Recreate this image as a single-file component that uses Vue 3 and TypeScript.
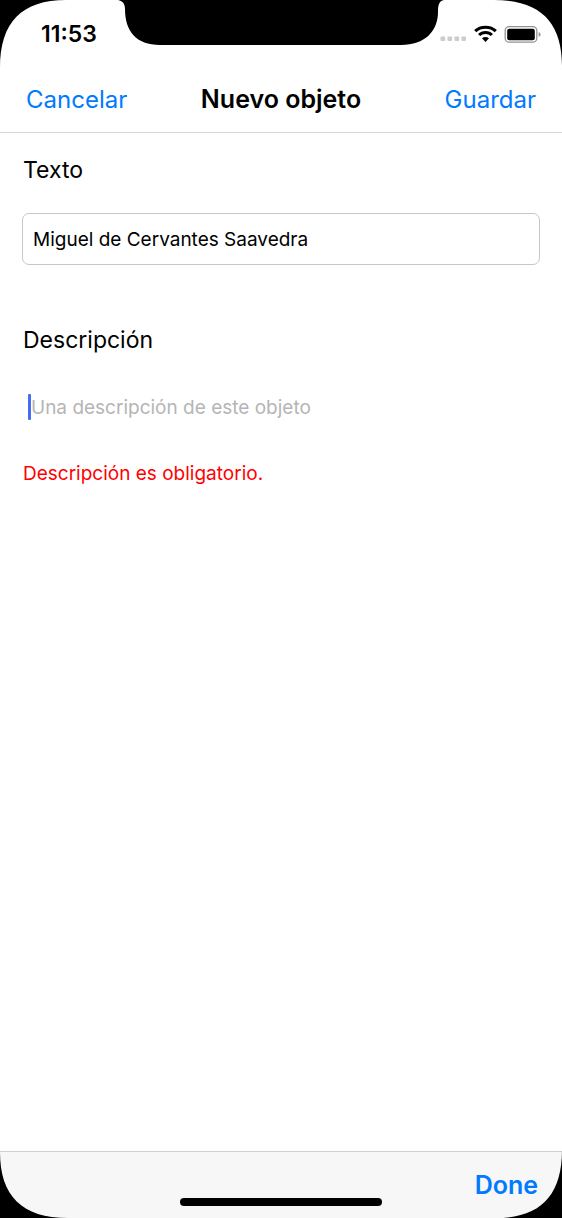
<script setup lang="ts">
import { ref } from 'vue'

const text = ref('Miguel de Cervantes Saavedra')
const description = ref('')
const corners = ['top-left', 'top-right', 'bottom-right', 'bottom-left']
</script>

<template>
  <div class="phone">
    <div class="status-bar">
      <span class="time">11:53</span>
      <div class="indicators">
        <svg width="26" height="20" viewBox="0 0 26 20" fill="#cccccc" aria-hidden="true">
          <rect x="0.500" y="12.500" width="4.600" height="4.600" rx="1" />
          <rect x="7.500" y="12.500" width="4.600" height="4.600" rx="1" />
          <rect x="14.500" y="12.500" width="4.600" height="4.600" rx="1" />
          <rect x="21.400" y="12.500" width="4.600" height="4.600" rx="1" />
        </svg>
        <svg width="24" height="20" viewBox="0 0 24 20" aria-hidden="true">
          <g fill="none" stroke="#000" stroke-width="3.100">
            <path d="M2.200 7.100C7.700 1.900 17.300 1.900 22.800 7.100" />
            <path d="M6.100 11C9.400 7.700 15.600 7.700 18.900 11" />
          </g>
          <path d="M9 14.300Q12.500 11.500 16 14.300L12.500 18Z" />
        </svg>
        <svg width="37" height="20" viewBox="0 0 37 20" aria-hidden="true">
          <rect x="1.200" y="2.600" width="31.600" height="15.600" rx="4" fill="none" stroke="#929292" stroke-width="1.3" />
          <rect x="3.200" y="4.700" width="27.600" height="11.500" rx="2" />
          <path d="M34.600 8.100Q36.600 8.800 36.600 10.400Q36.600 12 34.600 12.700Z" fill="#929292" />
        </svg>
      </div>
    </div>

    <header class="nav-bar">
      <button type="button" class="link">Cancelar</button>
      <h1>Nuevo objeto</h1>
      <button type="button" class="link end">Guardar</button>
    </header>

    <main class="form">
      <label for="text">Texto</label>
      <input id="text" v-model="text" class="boxed" type="text" />

      <label for="description">Descripción</label>
      <div class="plain">
        <input
          id="description"
          v-model="description"
          type="text"
          placeholder="Una descripción de este objeto"
          aria-describedby="description-error"
        />
        <span class="caret" aria-hidden="true"></span>
      </div>
      <p id="description-error" class="error">Descripción es obligatorio.</p>
    </main>

    <footer class="toolbar">
      <button type="button" class="link done">Done</button>
    </footer>

    <span class="home-indicator"></span>
    <svg class="notch" width="326" height="45" viewBox="0 0 326 45" aria-hidden="true">
      <path d="M0 0C5 1 7 4 7 9C7 31 18 45 42 45H283C307 45 320 31 320 12C320 5 321 1 326 0Z" />
    </svg>
    <svg v-for="corner in corners" :key="corner" class="corner" :class="corner" width="70" height="70" viewBox="0 0 70 70" aria-hidden="true">
      <path d="M0 0H66C22 0 0 22 0 68Z" />
    </svg>
  </div>
</template>

<style>
body {
  margin: 0;
  background: #fff;
}
</style>

<style scoped>
.phone {
  position: relative;
  display: flex;
  flex-direction: column;
  min-height: 100vh;
  overflow: hidden;
  background: #fff;
  color: #000;
  font-family: Inter, "Liberation Sans", sans-serif;
}

.status-bar {
  display: flex;
  align-items: center;
  justify-content: space-between;
  height: 68px;
  padding: 0 21px 0 41px;
  box-sizing: border-box;
}

.time {
  font-size: 23px;
  font-weight: 600;
}

.indicators {
  display: flex;
  align-items: center;
  gap: 7px;
}

.nav-bar {
  display: grid;
  grid-template-columns: 1fr auto 1fr;
  align-items: center;
  height: 65px;
  padding: 0 26px 2px;
  box-sizing: border-box;
  border-bottom: 1px solid #d5d5d5;
}

h1 {
  margin: 0;
  font-size: 25px;
  font-weight: 600;
}

.link {
  padding: 0;
  border: 0;
  background: none;
  color: #007aff;
  font: inherit;
  font-size: 24px;
  text-align: left;
  cursor: pointer;
}

.end {
  text-align: right;
}

.form {
  display: flex;
  flex: 1;
  flex-direction: column;
  padding: 20px 22px;
}

label {
  padding: 1px 1px 0;
  font-size: 23px;
  line-height: 32px;
}

input {
  width: 100%;
  height: 52px;
  padding: 0 10px;
  box-sizing: border-box;
  border: 1px solid transparent;
  border-radius: 7px;
  outline: none;
  background: transparent;
  color: #000;
  font: inherit;
  font-size: 19px;
}

.boxed {
  margin: 27px 0 58px;
  border-color: #c7c7c7;
}

.plain {
  position: relative;
  margin-top: 25px;
}

.plain input {
  padding: 0 8px;
}

input::placeholder {
  color: #b5b5b5;
  opacity: 1;
}

.caret {
  position: absolute;
  top: 13px;
  left: 6px;
  width: 3px;
  height: 26px;
  border-radius: 1px;
  background: #456fee;
}

.error {
  margin: 29px 1px 0;
  color: #f00;
  font-size: 19px;
  line-height: 24px;
}

.toolbar {
  display: flex;
  align-items: center;
  justify-content: flex-end;
  height: 67px;
  padding: 0 24px;
  box-sizing: border-box;
  border-top: 1px solid #d0d0d0;
  background: #f7f7f7;
}

.done {
  font-size: 25px;
  font-weight: 600;
}

.home-indicator {
  position: absolute;
  bottom: 12px;
  left: 50%;
  width: 202px;
  height: 8px;
  border-radius: 4px;
  background: #000;
  transform: translateX(-50%);
}

.notch {
  position: absolute;
  top: 0;
  left: 50%;
  transform: translateX(-50%);
}

.corner {
  position: absolute;
  pointer-events: none;
}

.top-left {
  top: 0;
  left: 0;
}

.top-right {
  top: 0;
  right: 0;
  transform: rotate(90deg);
}

.bottom-right {
  right: 0;
  bottom: 0;
  transform: rotate(180deg);
}

.bottom-left {
  bottom: 0;
  left: 0;
  transform: rotate(270deg);
}
</style>
